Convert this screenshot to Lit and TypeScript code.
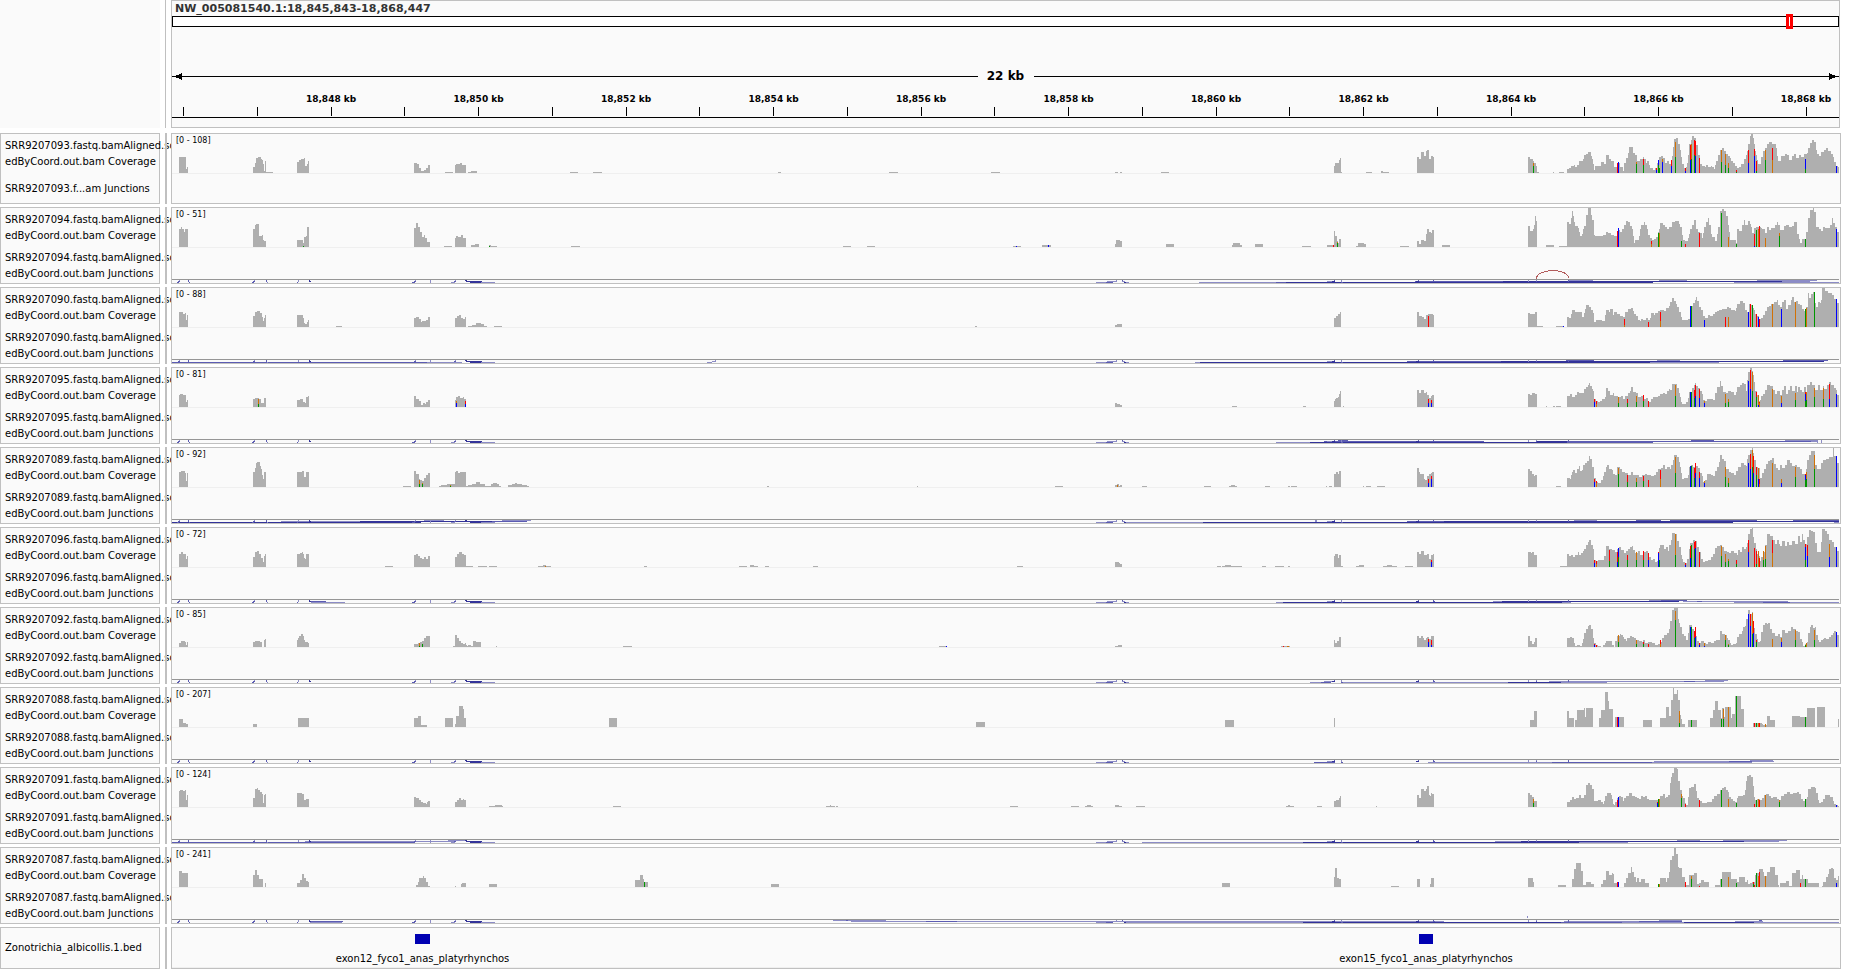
import { LitElement, html, svg, css, nothing } from "lit";
import { customElement, property } from "lit/decorators.js";

/* Horizontal unit of every plot: the visible locus is SPAN units wide. */
const SPAN = 5001;
const LOCUS = "NW_005081540.1:18,845,843-18,868,447";
const START_KB = 18845.843;
const END_KB = 18868.447;
const COVERAGE_HEIGHT = 39;

/* A run is an origin plus "offset:height" steps; a height holds until the next step. */
type Run = [number, string];

interface Track {
  id: string;
  max: number;
  coverage: Run[];
  /* "offset:A3G4" is a stack of mismatched bases, bottom first. */
  bases: Run[];
  /* "row from to shade" for splice junction arcs that reach below the centre line. */
  junctions: string;
  collapsed?: boolean;
  arc?: string;
}

const BASE_COLORS: Record<string, string> = {
  A: "#009600",
  C: "#0000ff",
  G: "#d17105",
  T: "#ff0000",
};

const SHADES: Record<string, string> = { l: "#8c8cc6", m: "#5c5cb2", d: "#333399" };

const EXON_JUNCTIONS =
  "2 15 21 m,1 18 24 m,0 21 24 l,0 48 51 m,1 48 51 m,2 51 54 m,2 240 246 m,1 243 249 m,0 246 249 l,0 282 285 m,1 282 285 m,2 285 288 l,2 375 378 m,1 378 381 l,0 378 381 l,0 411 414 d,1 411 417 d,2 720 729 m,1 726 732 m,0 729 732 l,0 774 777 l,1 774 777 l,2 774 777 l,2 837 849 l,1 846 852 m,0 849 852 l,0 879 885 d,1 882 930 d,2 894 927 d,2 927 969 l";
const MIDDLE_JUNCTIONS =
  "2 2772 2802 l,2 2802 2823 m,1 2805 2835 l,0 2832 2835 l,0 2850 2853 m,1 2850 2858 l,2 2856 2862 d,2 2862 2871 l,1 3465 3480 l,1 3480 3489 d,0 3486 3489 m,0 3507 3510 l,1 3507 3510 l,2 3507 3513 m,0 3738 3741 m,1 3732 3741 d,0 3783 3786 m,1 3783 3789 m,0 4068 4071 l,1 4068 4071 l,0 4092 4095 l,1 4092 4095 m,0 4188 4191 m,1 4188 4191 m";

const TRACKS: Track[] = [
  {
    id: "SRR9207093",
    max: 108,
    collapsed: true,
    coverage: [
      [0, "21:16 42:4 45:6 48:0 243:6 249:10 252:15 258:16 267:14 270:13 273:9 276:2 279:12 282:1 303:0 375:11 381:13 387:14 396:15 399:7 405:9 408:12 411:0 726:10 735:9 741:5 747:2 756:3 762:5 768:8 774:0 819:1 843:0 849:8 852:9 864:10 870:8 882:0 888:1 897:2 915:0 1193:1 1217:0 1263:1 1290:0 1818:1 1826:0 2151:1 2178:0 2457:1 2484:0"],
      [2724, "105:1 114:0 120:1 126:0 243:1 267:0 762:7 765:10 777:13 780:15 783:1 786:0 858:1 876:0 903:2 909:1 927:0 1011:16 1017:14 1023:21 1032:17 1038:22 1041:23 1047:14 1053:17 1059:16 1062:0"],
      [3984, "84:16 90:14 99:12 102:10 108:7 111:1 117:0 159:1 162:0 177:1 192:0 201:4 207:5 213:7 222:8 225:6 231:8 237:12 249:14 252:18 258:19 264:21 273:17 276:14 279:9 282:3 285:7 303:11 312:9 318:18 327:14 333:12 342:6 351:10 360:6 369:2 372:10 378:15 384:20 387:26 399:20 405:18 411:12 420:14 429:16 432:14 438:10 441:12 447:8 450:5 459:3 465:5 471:10 477:16 483:17 489:15 495:10 501:12 507:9 513:12 516:17 519:26 522:34 528:35 534:29 540:23 543:16 546:9 552:5 558:6 561:10 564:18 567:29 573:33 576:37 582:35 588:28 594:18 600:9 606:7 615:6 618:8 624:6 633:7 636:6 642:4 645:8 648:12 654:18 660:23 666:25 672:22 678:19 684:17 690:15 693:12 699:10 705:7 711:5 717:6 723:9 732:14 738:18 741:22 744:29 750:37 753:39 759:35 762:29 765:22 768:18 771:13 774:9 783:16 789:22 795:25 801:29 807:31 816:29 828:25 831:17 834:12 843:17 855:19 861:18 867:13 876:17 882:19 888:15 897:18 903:16 912:19 921:20 924:25 930:30 936:33 942:31 948:23 951:19 957:17 963:21 972:23 978:25 984:22 993:19 999:16 1002:11 1008:7 1014:6 1017:0"],
    ],
    bases: [
      [3984, "99:A7G3 351:T10 354:C11 408:A9G2 429:A8T6 468:C3T2 474:A8C5 477:A5 486:C11G3 513:C7T6 525:A16G15 555:C2T3 570:C13T15 573:A14G15 582:A18T15 585:C17T15 597:T15 663:A11G12 675:A8G11 684:A5G5 708:A1T2 744:C10T13 762:C17T7 768:A2T10 795:A13G10 816:G13T12 915:A4C10 1008:C7"],
    ],
    junctions: "",
  },
  {
    id: "SRR9207094",
    max: 51,
    coverage: [
      [0, "21:18 27:20 30:18 36:15 39:18 48:0 243:18 249:22 252:23 261:11 270:12 273:7 276:6 282:0 375:7 393:4 396:10 402:11 405:20 411:0 726:19 732:24 738:20 744:15 750:10 756:12 759:9 765:5 774:0 816:1 840:0 849:9 852:11 858:10 867:12 873:9 882:0 897:2 909:3 921:0 951:2 957:1 975:0 1197:1 1224:0 2013:1 2037:0 2085:1 2109:0 2523:1 2546:0 2610:2 2637:0"],
      [2724, "105:3 108:7 120:6 126:0 258:3 282:0 456:2 459:4 480:2 486:0 525:3 549:0 666:1 693:0 741:2 762:16 765:11 771:6 774:4 777:8 783:0 828:1 834:4 852:3 858:0 960:1 987:0 1011:6 1017:3 1023:7 1032:6 1038:13 1041:18 1047:15 1053:14 1056:17 1062:0 1086:2 1110:0"],
      [3984, "84:21 90:16 99:18 102:22 105:31 108:26 111:0 138:2 162:0 177:1 201:25 207:23 213:29 216:36 219:31 222:25 225:21 234:19 237:15 240:11 246:13 249:18 252:21 258:32 264:39 273:32 276:27 282:12 285:11 309:12 318:15 324:14 333:12 342:11 351:16 357:17 360:15 366:18 372:22 378:26 384:25 390:21 396:18 399:11 402:4 405:7 417:11 420:18 423:22 432:25 435:22 441:18 444:12 450:9 456:7 462:8 468:10 474:15 477:18 480:24 489:22 495:20 501:18 507:20 516:25 525:26 537:23 540:20 546:12 549:7 555:6 564:9 567:13 570:18 576:22 582:27 588:18 594:15 600:14 606:9 609:14 612:20 618:25 624:29 627:22 633:13 636:10 645:6 651:13 654:20 660:36 666:38 672:36 678:31 684:22 687:15 690:7 708:4 711:18 717:16 726:22 732:27 735:22 744:26 750:23 753:20 756:14 762:19 768:20 783:19 786:18 795:14 801:20 807:17 813:19 825:22 831:25 834:22 840:17 852:21 858:22 867:20 876:21 882:25 891:13 897:8 900:4 906:8 918:15 924:29 930:37 939:39 942:35 948:20 957:18 963:16 969:20 975:19 990:22 996:29 999:24 1005:20 1011:15 1017:0"],
    ],
    bases: [
      [0, "393:A1 951:A1 2532:C1 2628:C2"],
      [2724, "759:T2 771:A4G1"],
      [3984, "351:T16 354:C19 453:G3T3 474:A14 477:G14 543:A6 555:T3 597:T14 663:A34 684:G10 708:A3 762:C1T12 768:A17 774:G18 777:T21 795:G9 837:A11G3 915:A8 1008:C18"],
    ],
    junctions: "2 3081 3312 l,2 3312 3342 m,2 3342 4443 d,2 4686 5001 l,1 3729 3993 m,1 3993 4830 d,1 4830 4914 l,0 4192 4263 l,0 4461 4545 l,0 4755 4935 l",
    arc: "M4093 31 C4093 20 4189 20 4189 30",
  },
  {
    id: "SRR9207090",
    max: 88,
    coverage: [
      [0, "21:15 33:13 39:14 42:7 45:12 48:0 243:11 249:15 255:16 264:14 270:10 273:6 276:9 279:12 282:0 375:12 393:9 396:4 399:3 405:5 408:7 411:0 492:1 510:0 726:9 732:10 741:8 747:5 750:6 762:7 768:10 774:0 849:9 855:11 861:12 867:9 873:8 879:10 882:0 888:1 900:2 912:4 927:3 936:1 945:0 966:1 990:0 2409:1 2415:0"],
      [2724, "105:2 111:3 126:0 762:9 768:11 774:13 780:15 783:0 1011:15 1017:11 1026:10 1032:8 1038:12 1044:13 1059:12 1062:0 1344:14 1350:13 1365:15 1371:1 1389:0 1428:1 1452:0"],
      [4104, "81:10 87:9 93:13 96:17 105:15 126:10 132:14 135:18 138:22 147:20 153:17 159:14 162:5 168:7 186:6 195:12 198:17 207:15 210:18 219:12 222:15 231:13 240:11 249:10 255:15 264:18 273:19 279:16 282:13 288:11 294:7 300:6 303:8 309:7 318:9 324:7 330:9 333:14 342:12 345:14 354:16 360:17 372:16 378:19 387:21 390:25 396:29 402:26 408:23 411:20 417:15 423:10 426:7 444:8 450:18 453:21 459:24 465:27 468:30 471:26 477:20 483:17 489:11 495:9 504:12 510:11 519:13 525:15 531:16 537:17 546:18 561:20 567:19 573:17 585:16 588:19 591:23 600:26 609:24 615:17 621:15 627:23 633:22 639:19 642:17 645:13 651:11 657:8 663:9 669:12 675:16 681:20 687:21 693:23 702:25 711:27 714:22 720:20 726:25 732:27 738:18 744:22 753:27 756:30 762:25 768:26 774:23 780:22 786:18 792:16 798:20 804:34 807:29 813:33 819:35 825:24 828:20 834:25 840:24 843:27 846:39 855:36 864:34 876:32 882:28 888:27 891:24 897:0"],
    ],
    bases: [
      [2724, "1044:T11 1449:C1"],
      [4104, "252:G2T6 324:T5 360:G6T9 450:C21 453:A21 492:C7 555:T10 564:G10 624:C15 630:T23 636:A22 648:T13 654:C10 657:T8 696:G23 723:C18 765:G25 795:A18 798:G19 822:A35 888:C28"],
    ],
    junctions: "2 0 765 m,2 765 870 l,2 1605 1620 l,1 1620 1632 l,0 1629 1632 l,2 3069 3084 l,2 3084 4434 d,2 4434 4641 l,1 3705 3987 m,1 3987 4955 d,0 4182 4266 m,0 4455 4524 l,0 4833 4968 m",
  },
  {
    id: "SRR9207095",
    max: 81,
    coverage: [
      [0, "21:12 24:13 33:12 42:5 45:7 48:0 243:8 249:9 261:8 267:4 276:9 282:0 375:7 384:8 393:5 399:4 402:10 408:11 411:0 726:11 732:8 741:6 747:2 753:4 759:3 762:5 768:7 774:0 849:7 852:10 858:11 864:9 873:10 876:8 882:0"],
      [2724, "105:4 111:3 120:2 126:0 456:1 471:0 669:1 678:0 762:6 765:8 768:9 774:10 777:13 780:16 783:0 789:1 792:0 1011:17 1017:14 1023:17 1032:14 1038:15 1041:12 1047:9 1053:11 1056:12 1062:0 1344:13 1350:12 1356:14 1365:13 1371:0 1398:1 1401:0 1419:1 1425:0 1428:1 1443:0"],
      [4104, "81:11 90:13 96:10 105:12 111:15 117:14 132:18 138:20 144:22 147:24 150:21 156:18 159:16 162:8 168:6 174:5 180:6 186:8 195:10 198:19 204:16 210:12 219:14 222:11 234:10 243:11 249:8 255:11 264:14 270:16 273:20 279:15 288:14 294:10 303:11 312:8 318:9 324:5 333:8 339:10 354:11 360:13 369:14 375:13 381:16 387:18 390:17 396:23 411:19 417:14 420:10 423:5 426:3 438:5 444:9 447:15 456:19 462:22 465:24 468:21 474:19 480:16 486:13 489:7 495:6 501:8 519:7 525:14 531:20 540:26 543:21 549:15 558:14 564:16 573:15 582:12 588:15 591:20 600:22 606:24 612:23 618:16 621:27 624:35 630:39 636:36 639:32 642:25 645:16 651:12 657:6 660:7 663:11 669:13 675:17 681:22 690:21 699:17 705:13 711:16 720:12 726:17 732:21 738:13 744:17 750:21 756:16 765:21 771:15 774:20 780:17 786:15 792:20 798:15 801:22 810:25 816:22 825:17 834:22 840:17 849:21 852:18 861:22 867:25 873:22 882:19 888:17 891:12 897:0"],
    ],
    bases: [
      [0, "258:A3G5 852:C4G2 879:C3T3"],
      [2724, "1044:C4T4 1053:C4T3"],
      [4104, "162:C5T3 168:G3T3 234:A4G6 261:A4T4 288:A5G6 309:A6T6 324:T6 405:A11G11 450:C15 453:A15 462:A9T8 465:C11T11 477:C9T9 492:C4G2 555:A4G9 564:A5G3 624:C26 630:C18T19 636:A16G19 648:A10T5 654:C2G10 657:G4T1 696:G18 723:C4G7 765:A7G7 795:A6C7T2 798:A7G8 822:A10G9 849:A8G11 867:C8T15 888:C13"],
    ],
    junctions: "2 3312 3414 l,2 3414 4185 d,2 4185 4443 m,1 3456 3936 m,1 4095 4185 d,1 4185 4916 m,1 4916 4935 l,0 3498 3528 m,0 4557 4626 m,0 4839 4938 l,1 4935 4938 l,2 4935 4938 l,0 4947 4950 l,1 4947 4950 l,2 4947 4950 l",
  },
  {
    id: "SRR9207089",
    max: 92,
    coverage: [
      [0, "21:15 27:16 39:14 42:6 45:14 48:0 243:15 249:19 252:24 255:25 264:21 267:18 270:12 273:8 276:15 282:0 375:15 390:16 396:10 402:15 411:0 693:1 717:0 726:16 732:13 741:8 744:7 750:6 756:9 762:12 768:14 774:0 801:1 807:2 825:3 849:15 852:16 858:14 864:15 882:1 888:2 900:3 912:5 924:3 939:1 957:3 963:4 975:3 981:1 987:0 1008:2 1020:3 1029:4 1035:3 1050:2 1065:1 1071:0 1785:1 1791:0 2235:1 2238:0 2649:1 2673:0"],
      [2724, "105:2 111:3 117:1 120:2 126:0 186:1 201:0 372:1 393:0 447:1 453:2 465:1 471:0 555:1 570:0 624:1 630:0 633:1 651:0 738:1 741:0 747:1 756:0 762:13 768:15 774:13 777:16 783:0 849:1 852:0 858:1 873:0 891:1 915:0 1011:19 1017:15 1020:13 1032:8 1035:7 1041:11 1047:13 1053:14 1056:15 1062:0 1344:18 1350:16 1356:13 1362:11 1365:12 1371:0 1428:1 1443:0"],
      [4104, "81:9 90:8 93:12 96:15 99:17 105:14 111:18 117:21 120:16 126:17 129:22 135:24 141:26 147:31 150:28 156:20 162:9 168:5 174:4 183:7 189:11 192:15 198:20 201:22 207:18 216:17 219:13 225:12 231:20 240:18 246:15 255:14 264:12 273:15 279:12 297:10 306:12 315:13 321:12 333:11 342:12 348:15 354:18 363:19 369:22 375:18 381:20 390:18 393:22 399:27 402:32 411:30 417:25 420:20 423:14 426:8 432:9 444:12 447:20 453:22 459:20 465:24 468:21 474:19 480:14 486:11 489:5 495:7 501:13 513:12 519:11 525:16 531:20 537:25 540:32 546:28 552:26 558:18 567:15 573:14 582:12 588:16 594:20 603:24 612:22 618:21 621:28 624:32 630:37 636:39 639:34 642:27 648:20 654:19 660:9 666:14 672:18 678:23 684:26 690:27 696:29 702:23 708:19 714:17 720:22 726:19 735:22 741:27 750:24 756:21 765:22 771:20 780:18 786:13 798:18 801:27 807:32 813:36 825:22 831:18 843:24 849:27 858:28 867:30 879:39 882:31 891:24 897:0"],
    ],
    bases: [
      [0, "741:A3G4 750:A3G1 834:A1G1"],
      [2724, "111:G2 1044:C4T4 1053:C8T3"],
      [4104, "162:C5T3 168:G4T2 234:A13G6 261:A5T7 288:A5G4 309:A6T5 324:T7 360:G8T9 405:A14G16 450:C21 453:A21 462:A9T10 465:C14T10 477:C9T6 492:C4G2 555:A10G10 564:A4G5 624:C24 630:C18T15 636:A20G17 639:C14T17 648:A12T8 654:C8G11 657:G3T5 696:G24 723:C4G4 765:A10G10 795:A7C5T1 798:A8G7 822:A18G14 888:C31"],
    ],
    junctions: "2 0 748 d,1 327 564 l,1 564 960 d,1 960 1065 m,0 756 816 l,0 990 1077 l,2 2871 3093 l,2 3093 4683 d,1 3705 3816 m,1 3816 5001 d,0 3429 3435 l,1 3429 3435 l,0 4206 4275 l,0 4392 4467 m,0 4494 4755 m,0 4863 5001 m,2 4986 5001 l",
  },
  {
    id: "SRR9207096",
    max: 72,
    coverage: [
      [0, "21:13 27:15 33:13 42:8 45:11 48:0 243:10 249:15 255:16 261:13 267:9 273:5 276:11 279:13 282:0 375:13 384:14 390:15 393:13 396:9 399:8 402:13 411:0 639:1 663:0 726:12 732:13 738:11 744:9 750:8 756:10 762:8 768:11 774:0 849:10 855:13 861:15 870:13 876:12 882:1 903:0 918:1 945:0 951:1 975:0 1098:1 1113:2 1122:1 1137:0 1416:1 1425:0 1701:1 1725:0 1734:2 1746:1 1758:0 1779:1 1791:0 1923:1 1938:0 2535:1 2553:0"],
      [2724, "105:5 117:4 120:3 126:0 411:1 423:0 426:1 435:2 453:1 486:0 546:1 558:0 585:1 612:0 624:1 630:0 762:11 765:13 774:9 777:12 783:1 789:0 828:1 837:2 852:0 909:1 921:2 936:1 951:0 975:1 999:0 1011:15 1017:13 1023:16 1032:12 1041:13 1047:8 1053:12 1059:13 1062:0 1344:15 1353:14 1356:15 1362:12 1371:0"],
      [4104, "60:1 81:13 87:11 93:12 99:10 105:12 114:15 117:12 123:14 129:16 132:18 138:22 144:25 147:27 153:22 159:18 162:7 168:6 174:7 192:11 198:21 207:18 216:17 225:15 231:18 237:20 243:17 252:14 258:16 264:18 270:20 276:21 279:17 285:14 294:16 300:12 309:15 318:16 324:13 327:10 333:7 339:8 345:5 351:6 354:14 357:19 360:22 372:18 378:20 384:16 387:22 393:27 396:34 405:33 411:26 417:20 423:12 426:8 429:5 435:4 441:8 447:18 450:24 459:27 465:26 471:20 477:15 483:8 489:5 495:6 504:7 513:10 519:13 525:19 531:21 540:22 546:20 552:16 561:15 567:14 573:16 582:14 591:12 594:17 600:15 606:20 612:18 618:20 621:24 624:33 630:38 636:39 639:30 642:24 648:18 651:13 657:11 660:6 663:10 669:15 675:22 681:33 690:31 699:27 705:23 711:27 717:23 720:21 726:26 735:21 741:25 747:22 756:26 765:23 774:31 780:25 786:33 789:27 795:23 801:30 807:37 813:36 819:35 825:24 831:15 843:25 846:38 855:36 861:33 867:27 876:25 882:20 891:16 897:0"],
    ],
    bases: [
      [0, "1119:G1"],
      [2724, "1053:C5T2"],
      [4104, "162:C4T3 168:G3T3 207:A6T11 231:C5T10 234:A10C9 261:A7T5 288:A7G8 309:A7T9 324:C7T7 354:C14T1 357:A7 405:A12G21 435:C2T2 450:C9T12 453:A22 462:A18T7 465:C19T7 477:T15 543:A11G10 555:A5G8 564:A6G2 588:A3T4 624:C15T12 642:T19 648:A3T13 654:G16 657:T9 669:A7G9 675:A8G13 696:G14T13 795:A7C13T3 801:C11T11 867:C10G13 888:C20"],
    ],
    junctions: "1 411 462 m,2 417 518 l,2 3312 3333 l,2 3333 4170 d,2 4170 4197 l,1 3963 3990 l,1 3990 4521 d,0 4431 4467 l,0 4467 4545 m,1 4533 4848 l,1 4575 4590 m,2 4686 4773 l,2 4773 4854 m,2 4854 5001 l",
  },
  {
    id: "SRR9207092",
    max: 85,
    coverage: [
      [0, "21:4 27:6 39:5 42:2 45:5 48:0 243:5 249:6 264:5 270:0 276:7 279:8 282:0 375:7 378:9 381:11 387:13 393:11 396:7 399:5 408:4 411:0 726:3 738:4 744:5 750:6 756:9 762:11 774:0 843:1 849:12 855:9 861:6 867:4 873:3 879:4 882:2 885:1 888:2 897:1 903:6 912:5 927:0 972:1 975:0 1353:1 1380:0 2301:1 2325:0"],
      [2724, "105:1 114:2 126:0 603:1 630:0 762:7 765:4 771:6 777:10 783:0 1011:11 1017:9 1023:11 1029:9 1032:7 1038:9 1041:10 1047:8 1053:11 1062:0 1344:11 1350:6 1356:3 1362:5 1365:9 1371:0"],
      [4104, "81:9 90:10 96:9 102:4 105:1 111:2 120:1 126:4 129:8 132:14 138:18 144:21 147:22 153:18 159:9 162:4 168:2 174:1 183:0 189:2 195:4 198:6 216:2 222:0 225:6 231:11 240:13 243:12 249:10 252:8 258:6 261:9 270:11 276:10 282:9 288:7 297:6 306:5 309:7 315:4 324:5 336:4 345:2 354:3 360:5 366:9 372:12 381:14 387:18 390:26 396:37 402:39 414:28 417:24 420:20 426:13 432:11 438:7 444:14 447:22 456:18 462:16 465:20 468:11 471:6 477:4 483:6 492:4 498:3 504:5 513:4 522:6 528:7 540:16 546:13 555:12 561:9 564:7 570:4 573:2 579:3 588:4 591:10 597:13 606:16 609:20 615:21 618:28 624:37 630:33 636:35 639:26 642:19 645:13 651:8 654:5 660:6 663:15 669:22 675:24 681:23 684:24 690:18 696:14 705:11 714:13 720:10 726:17 735:14 744:16 753:20 759:18 768:16 774:15 780:8 786:5 789:1 795:3 801:5 804:14 810:20 813:22 819:19 825:20 828:12 834:7 837:5 843:7 849:8 852:9 858:8 867:10 873:12 879:14 882:16 888:15 891:12 897:0"],
    ],
    bases: [
      [0, "741:A1G3 750:A3 2322:C1"],
      [2724, "609:T1 621:G1 624:G1 1044:C5T3 1053:C2T5"],
      [4104, "162:C2T1 168:T2 234:A5G7 288:A3G4 309:A3T2 324:T3 360:G3T4 405:A27G9 450:C20 453:A20 462:A9T7 465:C10T10 477:C2T2 492:C1G3 555:A7G5 564:A2G1 624:C33 630:C21T12 636:A13G21 639:C14T12 648:A5T2 696:G8 723:C5G4 765:A7G10 795:A2 798:G4 822:A7G10 888:C15"],
    ],
    junctions: "2 3414 3465 l,1 3456 3480 l,2 3447 3477 m,2 3507 4008 l,2 4008 4167 d,2 4167 4305 l,1 4131 4656 l,1 4536 4569 m,0 4599 4668 l",
  },
  {
    id: "SRR9207088",
    max: 207,
    coverage: [
      [0, "21:8 33:4 42:3 48:0 243:3 255:0 378:9 411:0 726:9 738:11 747:2 765:0 819:9 843:0 849:3 852:11 861:21 873:18 876:9 882:0 1311:9 1335:0 2412:5 2439:0"],
      [2724, "435:7 462:0 762:9 765:0 1350:7 1362:16 1371:0"],
      [4104, "81:16 87:9 102:0 105:7 111:17 132:19 135:10 138:19 159:0 177:9 183:17 195:35 204:26 207:18 219:0 225:10 252:0 309:7 336:0 360:9 378:20 387:11 393:27 399:39 402:33 411:37 414:27 420:12 423:8 426:3 435:0 444:7 471:0 510:9 519:17 525:26 534:17 543:9 546:19 552:10 555:20 573:9 576:13 585:31 603:18 612:0 639:4 666:3 669:2 681:11 690:7 705:0 756:11 780:10 801:19 825:0 831:20 855:0 894:8 897:0"],
    ],
    bases: [
      [4104, "231:T10 234:C10 417:A4G12 453:A7 543:A8 549:A8G10 564:G20 588:A31 642:T4 648:A4 654:G4 657:T4 675:G3 795:A10"],
    ],
    junctions: "2 3426 3489 m,2 3768 4140 l,2 4140 4440 m,2 4440 4740 l,1 4446 4671 l,1 4671 4740 m,1 4740 4806 l,0 4734 4803 l",
  },
  {
    id: "SRR9207091",
    max: 124,
    coverage: [
      [0, "21:16 24:17 33:16 39:17 42:7 45:12 48:0 243:9 249:18 255:19 258:17 264:15 270:13 273:4 276:12 279:13 282:0 375:14 390:13 396:7 402:8 411:0 726:10 732:9 741:7 747:5 753:4 762:3 765:5 768:6 774:0 849:5 855:7 861:9 867:7 873:8 876:7 882:0 951:1 969:2 990:1 993:0 1323:1 1347:0 1962:1 1974:2 1977:1 1989:0 1992:1 1998:0 2514:1 2538:0 2697:1 2721:0"],
      [2724, "15:1 21:2 33:1 39:0 105:2 117:1 126:0 168:1 195:0 618:1 624:2 630:1 642:0 711:1 726:0 762:6 768:7 777:9 780:11 783:0 888:1 891:0 1011:12 1017:9 1023:18 1032:16 1038:18 1041:21 1047:12 1050:11 1053:14 1056:13 1062:0 1344:14 1350:12 1356:10 1362:6 1371:0"],
      [4104, "81:5 90:7 96:10 102:8 108:9 117:12 123:9 132:12 138:22 144:24 150:22 156:18 162:6 174:7 183:5 189:3 192:6 195:11 201:14 213:12 216:8 219:3 222:2 225:5 231:9 237:11 243:10 249:6 252:9 258:11 267:14 276:11 285:10 291:9 297:8 303:11 309:10 315:11 321:8 327:7 357:8 360:11 369:13 375:9 378:10 384:12 390:24 393:30 396:34 402:39 411:38 414:26 420:17 426:11 429:9 435:4 438:2 444:10 447:19 453:20 462:23 468:16 471:9 477:6 486:4 501:5 516:8 522:11 531:13 540:17 546:19 552:20 558:17 564:15 567:10 573:8 579:6 585:5 591:9 594:11 609:12 615:17 618:26 621:31 627:32 633:30 639:21 642:10 645:7 651:8 660:7 666:9 672:12 678:13 687:11 693:9 699:10 711:8 717:7 723:11 732:13 741:15 750:13 759:14 771:15 777:13 783:8 789:6 795:8 801:10 804:18 813:20 825:19 828:14 834:7 837:4 843:5 849:8 855:12 870:10 879:6 882:3 888:2 894:1 897:0"],
    ],
    bases: [
      [2724, "1359:A4G4"],
      [4104, "231:T7 234:C10 351:C4T1 354:A8 357:G8 423:A9G4 435:T3 477:T7 543:A17 564:G8 588:A4 642:T3 648:A7 654:G8 657:T7 675:G12 717:A5G2 795:A8 888:C2"],
    ],
    junctions: "2 0 285 m,2 285 555 l,1 398 849 l,0 828 880 l,2 285 726 m,2 2910 3393 l,2 3393 4220 d,2 4220 4368 l,1 3969 4047 l,1 4047 4716 d,1 4716 4821 l,0 4515 4584 l,0 4653 4845 l",
  },
  {
    id: "SRR9207087",
    max: 241,
    coverage: [
      [0, "21:16 30:14 48:0 243:12 249:17 255:12 261:8 273:0 279:4 282:0 375:4 384:7 390:13 396:9 402:6 408:5 411:0 732:2 738:5 741:9 753:11 756:9 762:5 768:1 774:0 849:1 852:0 867:3 870:4 882:0 951:3 975:0 1389:7 1404:12 1413:8 1416:5 1428:0 1797:3 1821:0"],
      [2724, "426:4 450:0 762:10 765:19 771:9 777:8 783:0 933:1 957:0 1011:8 1020:0 1050:3 1053:9 1062:0 1344:9 1359:5 1362:0 1434:2 1458:0"],
      [4104, "96:8 102:18 108:24 123:16 129:2 138:5 153:3 162:0 183:3 189:7 198:16 207:12 216:14 219:13 222:4 237:0 252:4 258:9 264:14 273:20 276:15 282:10 288:5 291:9 297:5 303:8 315:4 327:0 354:3 360:9 378:5 381:9 387:15 390:27 396:31 402:39 408:33 414:20 417:19 426:10 435:5 438:2 447:12 462:14 471:3 477:4 483:7 492:5 507:0 525:2 540:8 546:15 573:8 591:5 597:10 615:5 621:7 624:3 630:4 636:5 645:12 648:14 657:18 669:15 672:11 681:15 690:20 705:12 714:2 717:0 720:4 738:6 747:1 756:14 768:17 780:8 786:12 789:8 804:4 837:0 846:1 849:5 858:10 864:13 867:18 873:19 879:18 882:9 888:7 894:11 897:0"],
    ],
    bases: [
      [0, "1416:A5"],
      [4104, "231:T5 234:C5 354:A3 357:G3 435:T5 453:A8G3 477:T1 543:A8 564:G10 588:A4 639:A3T2 642:T2 648:A14 654:G11 657:T15 675:G11 780:T4 795:A8 888:C4"],
    ],
    junctions: "1 411 513 m,2 414 510 l,0 1983 2142 l,0 2022 2028 m,1 2037 2262 l,1 2262 2355 m,1 2355 3816 l,2 2868 3393 l,2 3393 4167 d,2 4167 4350 m,2 4350 4536 l,2 4536 4746 d,2 4746 5001 l,1 4176 4401 l,1 4401 4530 m,0 4461 4530 l,1 4689 4773 l,0 4761 4770 m,-4 4065 4068 l,-3 4065 4068 l",
  },
];

const FEATURES = [
  { name: "exon12_fyco1_anas_platyrhynchos", from: 729, to: 774 },
  { name: "exon15_fyco1_anas_platyrhynchos", from: 3741, to: 3783 },
];

function stepPath(runs: Run[]): string {
  let d = "";
  for (const [origin, steps] of runs) {
    const points = steps.split(" ").map((s) => s.split(":").map(Number));
    points.forEach(([x, h], i) => {
      const next = points[i + 1];
      if (!h || !next) return;
      d += `M${origin + x} ${COVERAGE_HEIGHT}v${-h}h${next[0] - x}v${h}z`;
    });
  }
  return d;
}

const percent = (v: number) => `${(v * 100).toFixed(3)}%`;

@customElement("coverage-plot")
class CoveragePlot extends LitElement {
  @property({ attribute: false }) track!: Track;

  static styles = css`
    :host { display: block; position: relative; border-bottom: 1px solid #efefef; }
    .plot { display: block; width: 100%; height: 39px; shape-rendering: crispEdges; }
    .range { position: absolute; left: 4px; top: 0; font-size: 8px; line-height: 13px; }
  `;

  private stack(origin: number, entry: string) {
    const [x, parts] = entry.split(":");
    let y = COVERAGE_HEIGHT;
    return [...parts.matchAll(/([ACGT])(\d+)/g)].map(([, base, h]) => {
      y -= Number(h);
      return svg`<rect x=${origin + Number(x)} y=${y} width="3" height=${h} fill=${BASE_COLORS[base]}></rect>`;
    });
  }

  render() {
    const { coverage, bases, max, id } = this.track;
    return html`
      <svg class="plot" viewBox="0 0 ${SPAN} ${COVERAGE_HEIGHT}" preserveAspectRatio="none" role="img" aria-label="${id} coverage">
        <path d=${stepPath(coverage)} fill="#afafaf"></path>
        ${bases.map(([origin, list]) => list.split(" ").map((e) => this.stack(origin, e)))}
      </svg>
      <span class="range">[0 - ${max}]</span>
    `;
  }
}

@customElement("junction-plot")
class JunctionPlot extends LitElement {
  @property({ attribute: false }) track!: Track;

  static styles = css`
    :host { display: block; }
    .plot { display: block; width: 100%; height: 35px; shape-rendering: crispEdges; }
    .empty { height: 29px; }
    .arc { fill: none; stroke: #b25c5c; stroke-width: 1px; vector-effect: non-scaling-stroke; }
  `;

  render() {
    const { collapsed, junctions, arc, id } = this.track;
    if (collapsed) return html`<div class="empty"></div>`;
    const marks = [junctions, EXON_JUNCTIONS, MIDDLE_JUNCTIONS].join(",").split(",");
    return html`
      <svg class="plot" viewBox="0 0 ${SPAN} 35" preserveAspectRatio="none" role="img" aria-label="${id} junctions">
        <rect x="0" y="31" width=${SPAN} height="1" fill="#969696"></rect>
        ${marks.map((m) => {
          const [row, from, to, shade] = m.split(" ");
          return svg`<rect x=${from} y=${32 + Number(row)} width=${Number(to) - Number(from)} height="1" fill=${SHADES[shade]}></rect>`;
        })}
        ${arc ? svg`<path class="arc" d=${arc}></path>` : nothing}
      </svg>
    `;
  }
}

@customElement("genome-ruler")
class GenomeRuler extends LitElement {
  static styles = css`
    :host { display: block; height: 126px; }
    .locus { margin: 0; padding-left: 3px; font-size: 11px; line-height: 15px; font-weight: bold; color: #333; }
    .ideogram { position: relative; height: 9px; border: 1px solid #000; background: #fff; }
    .window { position: absolute; left: 96.9%; top: -3px; width: 1px; height: 9px; border: 3px solid #f00; background: #fff; }
    .span { display: flex; align-items: center; height: 20px; margin-top: 39px; }
    .line { flex: 1; height: 1px; background: #000; }
    .head { width: 10px; height: 7px; flex: none; shape-rendering: crispEdges; }
    .size { width: 56px; text-align: center; font-size: 12px; line-height: 20px; font-weight: bold; }
    .labels { position: relative; height: 12px; margin-top: 7px; overflow-x: clip; }
    .label { position: absolute; transform: translateX(-50%); font-size: 9px; line-height: 12px; font-weight: bold; white-space: nowrap; }
    .ticks { display: block; width: 100%; height: 11px; margin-top: 2px; shape-rendering: crispEdges; }
  `;

  render() {
    const ticks = Array.from({ length: 23 }, (_, i) => 18846 + i);
    const at = (kb: number) => (kb - START_KB) / (END_KB - START_KB);
    return html`
      <h1 class="locus">${LOCUS}</h1>
      <div class="ideogram"><div class="window"></div></div>
      <div class="span">
        <svg class="head" viewBox="0 0 10 7"><path d="M0 3h2v0h2v-1h3v-1h2v-1h1v7h-1v-1h-2v-1h-3v-1h-4z"></path></svg>
        <div class="line"></div>
        <span class="size">22 kb</span>
        <div class="line"></div>
        <svg class="head" viewBox="0 0 10 7"><path d="M10 3h-2v0h-2v-1h-3v-1h-2v-1h-1v7h1v-1h2v-1h3v-1h4z"></path></svg>
      </div>
      <div class="labels">
        ${ticks
          .filter((kb) => kb % 2 === 0 && kb > 18846)
          .map((kb) => html`<span class="label" style="left:${percent(at(kb))}">${kb.toLocaleString("en-US")} kb</span>`)}
      </div>
      <svg class="ticks" viewBox="0 0 ${SPAN} 11" preserveAspectRatio="none" aria-hidden="true">
        ${ticks.map((kb) => svg`<rect x=${Math.floor((at(kb) * SPAN) / 3) * 3} y="0" width="3" height="9"></rect>`)}
        <rect x="0" y="10" width=${SPAN} height="1"></rect>
      </svg>
    `;
  }
}

@customElement("app-root")
export class AppRoot extends LitElement {
  static styles = css`
    :host { display: block; padding-right: 18px; background: #fff; color: #000; font-family: "DejaVu Sans", Verdana, sans-serif; font-size: 10px; line-height: 16px; }
    .row { display: grid; grid-template-columns: 160px 2px minmax(0, 1fr); margin-bottom: 3px; }
    .row.header { margin-bottom: 5px; }
    .names, .data { box-sizing: border-box; background: #fafafa; border: 1px solid #c0c0c0; }
    .names { display: flex; flex-direction: column; padding-left: 4px; min-width: 0; white-space: nowrap; }
    .header .names { border: 0; }
    .divider { margin-left: 5px; width: 2px; background: #c0c0c0; }
    .header .divider { width: 1px; }
    .data { margin-left: 9px; padding-right: 1px; overflow: hidden; }
    .header .data { margin-right: 1px; padding-right: 0; }
    .name { display: flex; flex-direction: column; justify-content: center; }
    .coverage { height: 40px; }
    .junctions { height: 35px; }
    .collapsed { height: 29px; }
    .features { position: relative; height: 39px; border-bottom: 1px solid #efefef; }
    .exon { position: absolute; top: 6px; height: 10px; background: #0000b2; }
    .exon-name { position: absolute; top: 24px; line-height: 14px; transform: translateX(-50%); white-space: nowrap; }
    .bed { flex: 1; padding-right: 4px; }
  `;

  private trackRow(track: Track) {
    return html`
      <section class="row">
        <div class="names">
          <div class="name coverage">
            <span>${track.id}.fastq.bamAligned.so</span>
            <span>edByCoord.out.bam Coverage</span>
          </div>
          ${track.collapsed
            ? html`<div class="name collapsed"><span>${track.id}.f...am Junctions</span></div>`
            : html`<div class="name junctions">
                <span>${track.id}.fastq.bamAligned.so</span>
                <span>edByCoord.out.bam Junctions</span>
              </div>`}
        </div>
        <div class="divider"></div>
        <div class="data">
          <coverage-plot .track=${track}></coverage-plot>
          <junction-plot .track=${track}></junction-plot>
        </div>
      </section>
    `;
  }

  render() {
    return html`
      <header class="row header">
        <div class="names"></div>
        <div class="divider"></div>
        <div class="data"><genome-ruler></genome-ruler></div>
      </header>
      ${TRACKS.map((t) => this.trackRow(t))}
      <section class="row">
        <div class="names"><div class="name bed"><span>Zonotrichia_albicollis.1.bed</span></div></div>
        <div class="divider"></div>
        <div class="data">
          <div class="features">
            ${FEATURES.map(
              (f) => html`
                <div class="exon" style="left:${percent(f.from / SPAN)};width:${percent((f.to - f.from) / SPAN)}"></div>
                <span class="exon-name" style="left:${percent((f.from + f.to) / 2 / SPAN)}">${f.name}</span>
              `
            )}
          </div>
        </div>
      </section>
    `;
  }
}
